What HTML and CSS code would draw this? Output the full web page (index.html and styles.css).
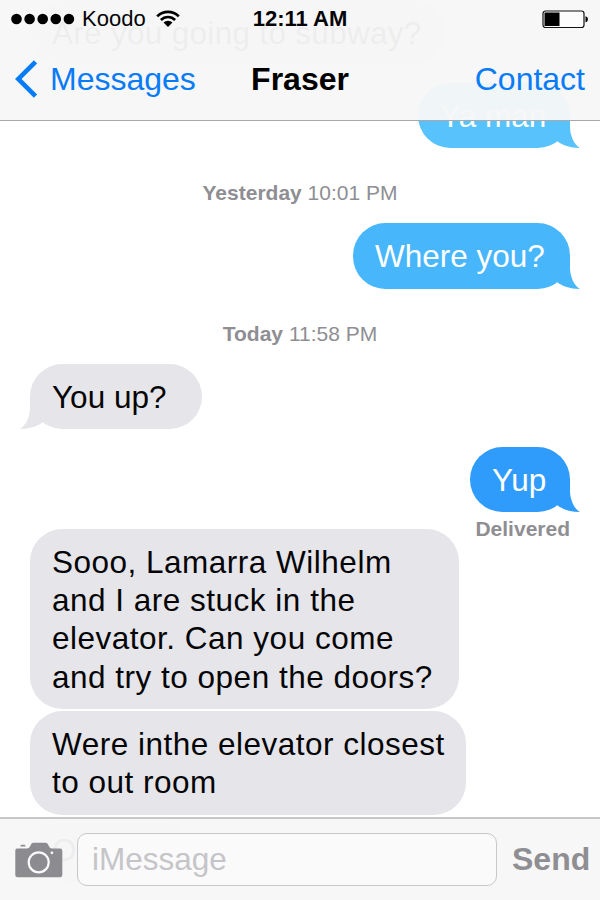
FILE: index.html
```html
<!DOCTYPE html>
<html lang="en">
<head>
<meta charset="utf-8">
<title>Messages</title>
<link rel="stylesheet" href="styles.css">
</head>
<body>
<svg class="defs" aria-hidden="true">
  <symbol id="tail" viewBox="0 0 30 34"><path d="M20 0V13C20 21 24 31 30 34C20 34 12 31 7 27L2 22V10Z"/></symbol>
</svg>
<div class="phone">
  <main class="thread">
    <div class="bubble in w-subway"><span class="l-subway">Are you going to subway?</span></div>
    <div class="bubble out sky gap w-ya"><span class="l-ya">Ya man</span><svg class="tail"><use href="#tail"/></svg></div>
    <div class="stamp t-yesterday"><span><b>Yesterday</b> 10:01 PM</span></div>
    <div class="bubble out azure w-where"><span class="l-where">Where you?</span><svg class="tail"><use href="#tail"/></svg></div>
    <div class="stamp t-today"><span><b>Today</b> 11:58 PM</span></div>
    <div class="bubble in w-up"><span class="l-up">You up?</span><svg class="tail"><use href="#tail"/></svg></div>
    <div class="bubble out blue gap w-yup"><span class="l-yup">Yup</span><svg class="tail"><use href="#tail"/></svg></div>
    <div class="receipt">Delivered</div>
    <div class="bubble in w-stuck">
      <span class="l-s1">Sooo, Lamarra Wilhelm</span>
      <span class="l-s2">and I are stuck in the</span>
      <span class="l-s3">elevator. Can you come</span>
      <span class="l-s4">and try to open the doors?</span>
    </div>
    <div class="bubble in next w-closest">
      <span class="l-c1">Were inthe elevator closest</span>
      <span class="l-c2">to out room</span>
    </div>
    <div class="bubble in next w-last"><span>O</span></div>
  </main>

  <header class="top">
    <div class="status">
      <div class="carrier">
        <svg class="dots" viewBox="0 0 64 12"><circle cx="5.5" cy="6" r="5.3"/><circle cx="18.6" cy="6" r="5.3"/><circle cx="31.7" cy="6" r="5.3"/><circle cx="44.8" cy="6" r="5.3"/><circle cx="57.9" cy="6" r="5.3"/></svg>
        <span class="name">Koodo</span>
        <svg class="wifi" viewBox="0 0 24 18"><path d="M1.2 6.3A15.3 15.3 0 0 1 22.8 6.3M4.9 10A10 10 0 0 1 19.1 10" fill="none" stroke="#000" stroke-width="2.6"/><path d="M7.5 12.5A6.4 6.4 0 0 1 16.5 12.5L12 17Z"/></svg>
      </div>
      <div class="clock">12:11 AM</div>
      <svg class="battery" viewBox="0 0 47 19"><rect x="1" y="1" width="41" height="16.5" rx="2.5" fill="#fcfcfc" stroke="#111" stroke-width="1.2"/><rect x="2.5" y="2.5" width="15" height="13.5"/><path d="M43.5 6.2C46.7 6.7 46.7 11.8 43.5 12.3Z"/></svg>
    </div>
    <nav class="nav">
      <div class="back"><svg class="chevron" viewBox="0 0 24 38"><path d="M20.5 1.8L3.2 19L20.5 36.2" fill="none" stroke="#087bf6" stroke-width="4.6"/></svg><span>Messages</span></div>
      <div class="title">Fraser</div>
      <div class="contact">Contact</div>
    </nav>
  </header>

  <footer class="composer">
    <svg class="camera" viewBox="0 0 48 36"><path d="M2 6.5H12Q14 6.5 15.3 4L16.2 2Q17.1 .8 18.8 .8H30.2Q31.9 .8 32.8 2L33.8 4Q35 6.5 37 6.5H45Q47.3 6.5 47.3 8.8V33Q47.3 35.3 45 35.3H2.5Q.3 35.3 .3 33V8.8Q.3 6.5 2 6.5ZM6.4 2.7H9.5Q10.5 2.7 10.5 4.6H5.4Q5.4 2.7 6.4 2.7Z" fill="#8b8b90"/><circle cx="23.7" cy="20.3" r="10" fill="none" stroke="#fafafa" stroke-width="2.2"/><circle cx="36.9" cy="10.8" r="1.4" fill="#fafafa"/></svg>
    <div class="field"><span>iMessage</span></div>
    <div class="send">Send</div>
  </footer>
</div>
</body>
</html>
```

FILE: styles.css
```css
* { box-sizing: border-box; }
body {
  margin: 0;
  background: #fff;
  color: #050507;
  font-family: "Liberation Sans", Arial, sans-serif;
}
svg { display: block; }
.defs { position: absolute; width: 0; height: 0; }
.phone {
  position: relative;
  width: 600px;
  height: 900px;
  overflow: hidden;
}

/* conversation, scrolled underneath the translucent bars */
.thread {
  display: flex;
  flex-direction: column;
  align-items: flex-start;
  width: 600px;
  height: 900px;
  padding: 0 30px;
}
.thread > * { flex: none; }
.bubble {
  position: relative;
  padding: 14px 0 13.2px 22px;
  border-radius: 32.5px;
  font-size: 31.5px;
  line-height: 38.2px;
}
.bubble span { display: block; width: max-content; }
.in { background: #e5e5ea; fill: #e5e5ea; }
.out { align-self: flex-end; color: #fff; }
.sky { background: #57c2fb; fill: #57c2fb; }
.azure { background: #48b6fb; fill: #48b6fb; }
.blue { background: #2f9cfb; fill: #2f9cfb; }
.gap { margin-top: 17.2px; }
.next { margin-top: 2px; }
.tail {
  position: absolute;
  right: -10px;
  bottom: 0;
  width: 30px;
  height: 34px;
}
.in .tail { right: auto; left: -10px; transform: scaleX(-1); }

.w-subway { width: 415px; }
.w-ya { width: 152px; }
.w-where { width: 217px; }
.w-up { width: 172px; }
.w-yup { width: 100px; }
.w-stuck { width: 429px; }
.w-closest { width: 436px; }
.w-last { width: 160px; }

.l-subway { letter-spacing: .3px; }
.l-s1, .l-s2, .l-s3, .l-s4, .l-c1, .l-c2 { letter-spacing: .5px; }

.stamp {
  display: flex;
  justify-content: center;
  align-items: center;
  align-self: stretch;
  height: 75.3px;
  padding-top: 15px;
  color: #8e8e93;
  font-size: 21px;
}
.receipt {
  align-self: flex-end;
  height: 17px;
  padding-top: 5px;
  color: #8e8e93;
  font-size: 21px;
  font-weight: bold;
  line-height: 24px;
}

.top {
  position: absolute;
  top: 0;
  left: 0;
  width: 600px;
  height: 121px;
  border-bottom: 1px solid #a9a9ac;
  background: rgba(247, 247, 247, .96);
}
.status, .nav {
  display: grid;
  grid-template-columns: 1fr auto 1fr;
  align-items: center;
}
.status { height: 38px; padding: 0 11px; }
.carrier { display: flex; align-items: center; }
.dots { width: 64px; height: 12px; }
.name { margin-left: 7px; font-size: 22px; }
.wifi { width: 24px; height: 18px; margin-left: 10px; }
.clock { font-size: 22px; font-weight: bold; }
.battery { width: 47px; height: 19px; justify-self: end; }
.nav { height: 82px; padding: 0 15px; font-size: 32px; color: #087bf6; }
.back { display: flex; align-items: center; }
.chevron { width: 24px; height: 38px; margin-right: 11px; }
.title { color: #000; font-weight: bold; }
.contact { justify-self: end; }

.composer {
  position: absolute;
  left: 0;
  bottom: 0;
  display: flex;
  align-items: center;
  width: 600px;
  height: 83px;
  padding-left: 15px;
  border-top: 2px solid #c8c8c8;
  background: rgba(247, 247, 247, .96);
}
.camera { width: 48px; height: 36px; }
.field {
  display: flex;
  align-items: center;
  width: 420px;
  height: 53px;
  margin-left: 14px;
  padding-left: 14px;
  border: 1.5px solid #c8c8cb;
  border-radius: 10px;
  background: #fafafa;
  color: #c5c5c9;
  font-size: 31.5px;
}
.send { margin-left: 15px; color: #8e8e93; font-size: 32px; font-weight: bold; }
```
